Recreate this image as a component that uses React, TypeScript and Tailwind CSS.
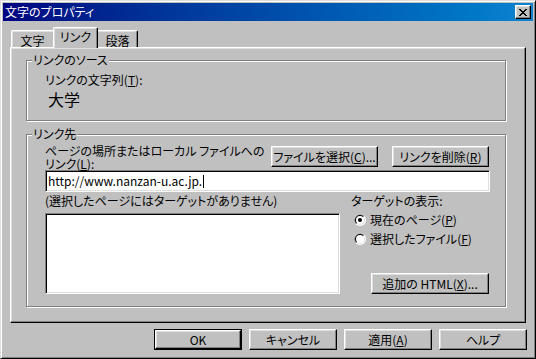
import type { ReactNode } from "react";

const raised =
  "border border-t-white border-l-white border-r-black border-b-black bg-[#c0c0c0] shadow-[inset_-1px_-1px_0_#808080,inset_1px_1px_0_#dfdfdf]";
const sunken =
  "border border-t-[#808080] border-l-[#808080] border-r-white border-b-white bg-white shadow-[inset_1px_1px_0_#000,inset_-1px_-1px_0_#dfdfdf]";
const etched =
  "relative border border-[#808080] shadow-[inset_1px_1px_0_#fff,1px_1px_0_#fff]";

function Button({
  className,
  children,
}: {
  className: string;
  children: ReactNode;
}) {
  return (
    <div
      className={`${raised} ${className} flex items-center justify-center whitespace-nowrap text-[12px] leading-[13px] text-black`}
    >
      {children}
    </div>
  );
}

function Radio({ checked }: { checked?: boolean }) {
  return (
    <svg width="12" height="12" viewBox="0 0 12 12" className="shrink-0">
      <circle cx="6" cy="6" r="6" fill="#ffffff" />
      <path d="M1.76 10.24A6 6 0 0 1 10.24 1.76Z" fill="#808080" />
      <circle cx="6" cy="6" r="5" fill="#dfdfdf" />
      <path d="M2.46 9.54A5 5 0 0 1 9.54 2.46Z" fill="#000000" />
      <circle cx="6" cy="6" r="4" fill="#ffffff" />
      {checked && <circle cx="6" cy="6" r="2" fill="#000000" />}
    </svg>
  );
}

function Group({
  label,
  className,
  children,
}: {
  label: string;
  className: string;
  children: ReactNode;
}) {
  return (
    <div className={`${etched} ${className}`}>
      <span className="absolute -top-[8px] left-[5px] bg-[#c0c0c0] px-[1px] leading-[14px] whitespace-nowrap">
        {label}
      </span>
      {children}
    </div>
  );
}

export default function App() {
  return (
    <div className="h-[359px] w-[536px] font-['Noto_Sans_CJK_JP','Noto_Sans',sans-serif] text-[12px] text-black [font-feature-settings:'palt']">
      <div className="flex h-full w-full flex-col border border-t-[#dfdfdf] border-l-[#dfdfdf] border-r-black border-b-black bg-[#c0c0c0] p-[2px] shadow-[inset_1px_1px_0_#fff,inset_-1px_-1px_0_#808080]">
        {/* title bar */}
        <div className="flex h-[18px] items-center justify-between bg-linear-to-r from-[#000080] to-[#1084d0] pl-[2px]">
          <span className="leading-[14px] text-white whitespace-nowrap">文字のプロパティ</span>
          <div className={`${raised} mr-[2px] flex h-[14px] w-[16px] items-center justify-center`}>
            <svg width="8" height="7" viewBox="0 0 8 7">
              <path
                d="M0 0h2v1h1v1h2V1h1V0h2v1H7v1H6v1H5v1h1v1h1v1h1v1H6V6H5V5H3v1H2v1H0V6h1V5h1V4h1V3H2V2H1V1H0Z"
                fill="#000"
              />
            </svg>
          </div>
        </div>

        <div className="ml-[7px] mt-[6px] flex flex-col">
          {/* tabs */}
          <div className="relative z-10 ml-[1px] flex h-[21px] items-end">
            <div className="mb-[1px] flex h-[17px] w-[42px] items-center justify-center rounded-tl-[2px] border-t border-l border-white bg-[#c0c0c0] shadow-[inset_1px_1px_0_#dfdfdf]">
              <span className="mt-[2px] leading-[13px]">文字</span>
            </div>
            <div className="flex h-[21px] w-[45px] items-start justify-center rounded-t-[2px] border-t border-l border-r border-t-white border-l-white border-r-black bg-[#c0c0c0] pt-[2px] shadow-[inset_-1px_0_0_#808080,inset_1px_1px_0_#dfdfdf]">
              <span className="leading-[13px]">リンク</span>
            </div>
            <div className="mb-[1px] flex h-[17px] w-[40px] items-center justify-center rounded-tr-[2px] border-t border-r border-t-white border-r-black bg-[#c0c0c0] shadow-[inset_-1px_0_0_#808080,inset_0_1px_0_#dfdfdf]">
              <span className="mt-[2px] leading-[13px]">段落</span>
            </div>
          </div>

          {/* tab panel */}
          <div className={`${raised} -mt-px flex h-[276px] w-[516px] flex-col pl-[15px] pt-[12px]`}>
            <Group label="リンクのソース" className="h-[61px] w-[480px] pl-[18px] pt-[12px]">
              <div className="leading-[14px] whitespace-nowrap">
                リンクの文字列(<u>T</u>):
              </div>
              <div className="ml-[3px] mt-[2px] text-[16px] leading-[20px]">大学</div>
            </Group>

            <Group label="リンク先" className="mt-[13px] h-[173px] w-[480px] pl-[18px] pt-[9px]">
              <div className="flex">
                <div className="w-[226px] leading-[13px] whitespace-nowrap">
                  ページの場所またはローカル ファイルへの
                  <br />
                  リンク(<u>L</u>):
                </div>
                <Button className="mt-[2px] h-[21px] w-[107px]">
                  ファイルを選択(<u>C</u>)...
                </Button>
                <Button className="ml-[14px] mt-[2px] h-[21px] w-[97px]">
                  リンクを削除(<u>R</u>)
                </Button>
              </div>
              <div className={`${sunken} flex h-[22px] w-[445px] items-center pl-[2px]`}>
                <span className="leading-[14px] whitespace-nowrap">http://www.nanzan-u.ac.jp.</span>
                <span className="ml-[1px] h-[13px] w-px bg-black" />
              </div>
              <div className="mt-[2px] flex">
                <div className="flex w-[295px] flex-col">
                  <div className="leading-[13px] whitespace-nowrap">
                    (選択したページにはターゲットがありません)
                  </div>
                  <div className={`${sunken} mt-[6px] h-[81px] w-[295px]`} />
                </div>
                <div className="ml-[11px] flex flex-col">
                  <div className="leading-[13px] whitespace-nowrap">ターゲットの表示:</div>
                  <div className="ml-[3px] mt-[6px] flex h-[14px] items-center gap-[4px] whitespace-nowrap">
                    <Radio checked />
                    <span className="leading-[14px]">
                      現在のページ(<u>P</u>)
                    </span>
                  </div>
                  <div className="ml-[3px] mt-[5px] flex h-[14px] items-center gap-[4px] whitespace-nowrap">
                    <Radio />
                    <span className="leading-[14px]">
                      選択したファイル(<u>F</u>)
                    </span>
                  </div>
                  <Button className="ml-[20px] mt-[27px] h-[21px] w-[118px]">
                    追加の HTML(<u>X</u>)...
                  </Button>
                </div>
              </div>
            </Group>
          </div>
        </div>

        {/* dialog buttons */}
        <div className="ml-[151px] mt-[6px] flex gap-[7px]">
          <div className="h-[21px] w-[88px] border border-black">
            <Button className="h-full w-full">OK</Button>
          </div>
          <Button className="h-[21px] w-[88px]">キャンセル</Button>
          <Button className="h-[21px] w-[88px]">
            適用(<u>A</u>)
          </Button>
          <Button className="h-[21px] w-[88px]">ヘルプ</Button>
        </div>
      </div>
    </div>
  );
}
